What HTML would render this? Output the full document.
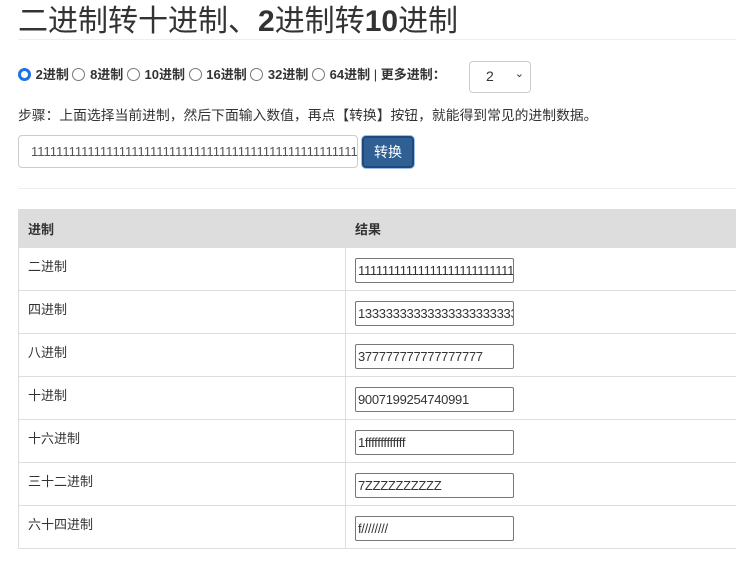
<!DOCTYPE html>
<html><head><meta charset="utf-8"><style>
*{box-sizing:border-box;margin:0;padding:0}
body{width:736px;height:561px;overflow:hidden;background:#fff;font-family:"Liberation Sans","Noto Sans CJK SC",sans-serif;color:#333;position:relative}
.a{position:absolute}
h1{position:absolute;left:18px;top:5px;font-size:30px;font-weight:normal;color:#333;white-space:nowrap;line-height:34px}
h1 b{font-weight:bold}
.line{left:18px;right:0;height:1px;background:#eee}
.radios{left:18px;top:66px;font-size:13px;font-weight:bold;white-space:nowrap;line-height:18px}
.r{display:inline-block;width:13px;height:13px;border:1px solid #777;border-radius:50%;vertical-align:-2px;margin-right:1px}
.r.on{border:3.5px solid #1a73e8}
.sel{left:469px;top:61px;width:62px;height:32px;border:1px solid #ccc;border-radius:4px;font-size:14px;padding:6px 0 0 16px}
.steps{left:18px;top:104px;font-size:13.8px;color:#333}
.inp{left:18px;top:135px;width:340px;height:33px;border:1px solid #ccc;border-radius:4px;font-size:13px;padding:8px 12px;color:#555;overflow:hidden;white-space:nowrap}
.btn{left:362px;top:136px;width:52px;height:32px;background:#2f5f93;border:2px solid #1d4a7a;border-radius:4px;color:#fff;font-size:14px;text-align:center;line-height:28px;box-shadow:0 0 0 1px #9cc0ea}
table{position:absolute;left:18px;top:209px;width:740px;border-collapse:collapse;font-size:13px}
th{background:#ddd;height:38px;text-align:left;padding-left:9px;font-weight:bold;border:1px solid #ddd}
td{height:43px;border:1px solid #ddd;vertical-align:top;padding:8px 9px 0}
td.c1{width:327px}
td span{display:block;width:159px;height:25px;border:1px solid #777;border-radius:2px;font-size:13px;padding:4px 2px;overflow:hidden;white-space:nowrap;margin-top:2px;letter-spacing:-0.3px}
</style></head><body>
<h1>二进制转十进制、<b>2</b>进制转<b>10</b>进制</h1>
<div class="a line" style="top:39px"></div>
<div class="a radios"><span class="r on"></span> 2进制 <span class="r"></span> 8进制 <span class="r"></span> 10进制 <span class="r"></span> 16进制 <span class="r"></span> 32进制 <span class="r"></span> 64进制 <span style="font-weight:normal">|</span> 更多进制：</div>
<div class="a sel">2<span style="position:absolute;right:6px;top:5px;font-size:11px">&#8964;</span></div>
<div class="a steps">步骤：上面选择当前进制，然后下面输入数值，再点【转换】按钮，就能得到常见的进制数据。</div>
<div class="a inp">11111111111111111111111111111111111111111111111111111</div>
<div class="a btn">转换</div>
<div class="a line" style="top:188px"></div>
<table>
<tr><th>进制</th><th>结果</th></tr>
<tr><td class="c1">二进制</td><td><span>11111111111111111111111111</span></td></tr>
<tr><td class="c1">四进制</td><td><span>133333333333333333333333</span></td></tr>
<tr><td class="c1">八进制</td><td><span>377777777777777777</span></td></tr>
<tr><td class="c1">十进制</td><td><span>9007199254740991</span></td></tr>
<tr><td class="c1">十六进制</td><td><span>1fffffffffffff</span></td></tr>
<tr><td class="c1">三十二进制</td><td><span>7ZZZZZZZZZZ</span></td></tr>
<tr><td class="c1">六十四进制</td><td><span>f////////</span></td></tr>
</table>
</body></html>
